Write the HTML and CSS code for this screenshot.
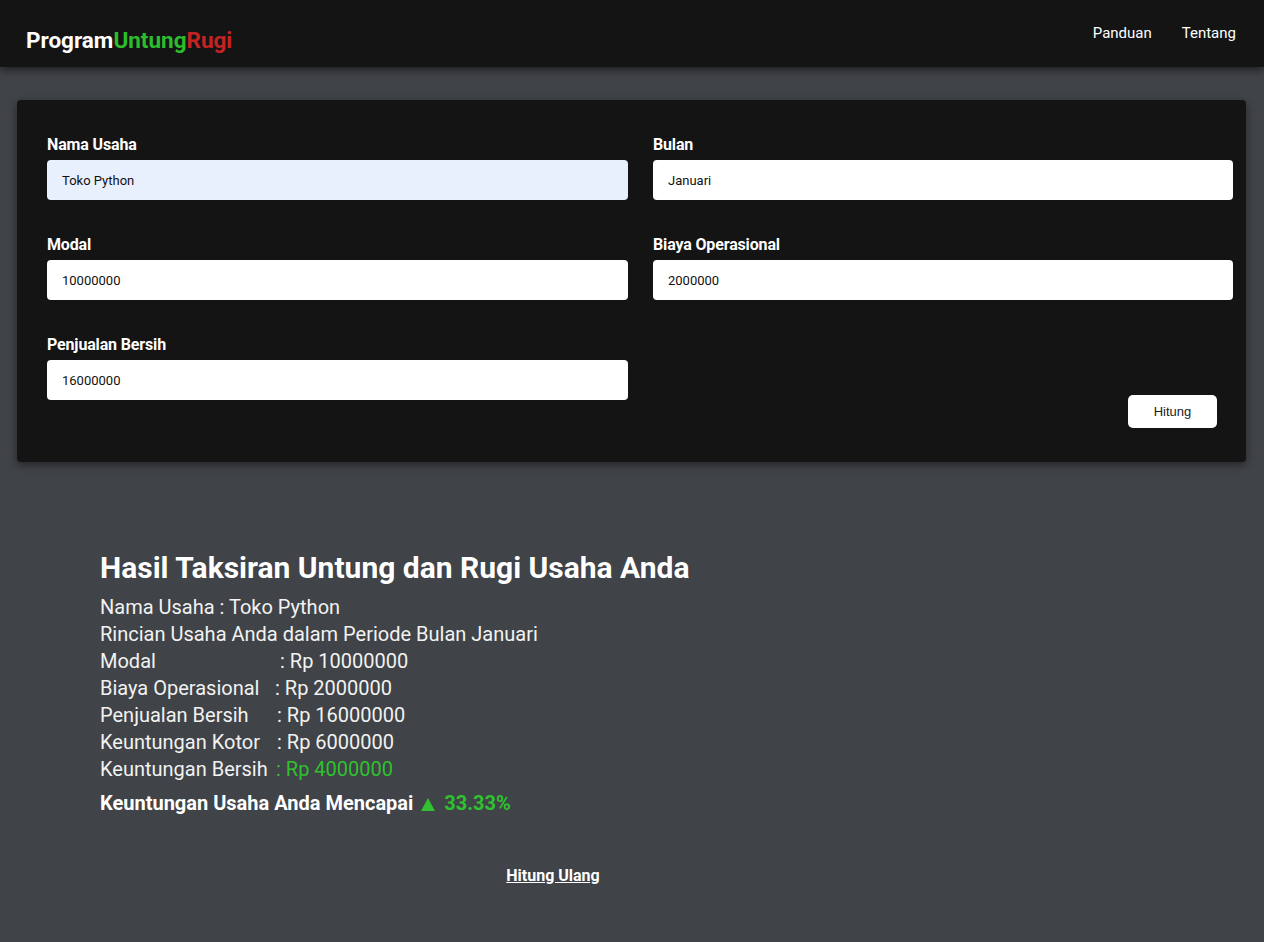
FILE: index.html
```html
<!DOCTYPE html>
<html lang="id">
<head>
<meta charset="utf-8">
<title>Program Untung Rugi</title>
<link rel="stylesheet" href="styles.css">
</head>
<body>
<header class="navbar">
  <div class="brand"><span class="b-white">Program</span><span class="b-green">Untung</span><span class="b-red">Rugi</span></div>
  <nav class="nav-links">
    <a href="#">Panduan</a>
    <a href="#">Tentang</a>
  </nav>
</header>

<main class="page">
  <form class="card">
    <div class="field">
      <label>Nama Usaha</label>
      <input class="input autofill" type="text" value="Toko Python">
    </div>
    <div class="field">
      <label>Bulan</label>
      <input class="input" type="text" value="Januari">
    </div>
    <div class="field">
      <label>Modal</label>
      <input class="input" type="text" value="10000000">
    </div>
    <div class="field">
      <label>Biaya Operasional</label>
      <input class="input" type="text" value="2000000">
    </div>
    <div class="field">
      <label>Penjualan Bersih</label>
      <input class="input" type="text" value="16000000">
    </div>
    <div class="actions">
      <button type="button" class="btn">Hitung</button>
    </div>
  </form>

  <section class="results">
    <h1 class="res-title">Hasil Taksiran Untung dan Rugi Usaha Anda</h1>
    <p class="res-line">Nama Usaha : Toko Python</p>
    <p class="res-line">Rincian Usaha Anda dalam Periode Bulan Januari</p>
    <p class="res-line"><span class="k k-modal">Modal</span>: Rp 10000000</p>
    <p class="res-line"><span class="k k-biaya">Biaya Operasional</span>: Rp 2000000</p>
    <p class="res-line"><span class="k k-jual">Penjualan Bersih</span>: Rp 16000000</p>
    <p class="res-line"><span class="k k-kotor">Keuntungan Kotor</span>: Rp 6000000</p>
    <p class="res-line"><span class="k k-bersih">Keuntungan Bersih</span><span class="green">: Rp 4000000</span></p>
    <p class="res-total">Keuntungan Usaha Anda Mencapai <span class="green"><svg class="tri" width="14" height="13" viewBox="0 0 14 13" aria-hidden="true"><polygon points="7,0 14,13 0,13" fill="#2fc12f"/></svg> 33.33%</span></p>
    <div class="again"><a href="#">Hitung Ulang</a></div>
  </section>
</main>
</body>
</html>
```

FILE: styles.css
```css
* { box-sizing: border-box; }

html, body {
  margin: 0;
  padding: 0;
}

body {
  background: #404347;
  font-family: Roboto, "Liberation Sans", sans-serif;
  color: #ffffff;
  min-height: 942px;
}

.navbar {
  height: 67px;
  background: #141414;
  display: flex;
  align-items: center;
  justify-content: space-between;
  padding: 0 28px 0 26px;
  box-shadow: 0 3px 8px rgba(0, 0, 0, 0.55);
  position: relative;
  z-index: 2;
}

.brand {
  font-size: 22.5px;
  font-weight: 700;
  margin-top: 13px;
}
.b-white { color: #ffffff; }
.b-green { color: #2cbd2c; }
.b-red { color: #c42323; }

.nav-links {
  display: flex;
  gap: 30px;
  margin-bottom: 2px;
}
.nav-links a {
  color: #ffffff;
  text-decoration: none;
  font-size: 15px;
}

.page {
  padding: 33px 18px 0 17px;
}

.card {
  background: #141414;
  border-radius: 4px;
  box-shadow: 0 3px 8px rgba(0, 0, 0, 0.45);
  padding: 36px 13px 34px 30px;
  display: grid;
  grid-template-columns: 581px 580px;
  column-gap: 25px;
  row-gap: 36px;
  margin: 0;
}

.field {
  display: flex;
  flex-direction: column;
}

.field label {
  font-size: 16px;
  font-weight: 700;
  line-height: 18px;
  margin-bottom: 6px;
  letter-spacing: -0.15px;
}

.input {
  height: 40px;
  border: none;
  border-radius: 4px;
  background: #ffffff;
  padding: 0 15px;
  font-family: Roboto, "Liberation Sans", sans-serif;
  font-size: 13px;
  color: #111111;
  outline: none;
}
.input.autofill {
  background: #e8f0fe;
}

.actions {
  display: flex;
  justify-content: flex-end;
  align-items: flex-start;
  padding-top: 59px;
  padding-right: 16px;
}

.btn {
  width: 89px;
  height: 33px;
  background: #ffffff;
  border: none;
  border-radius: 5px;
  font-family: "Liberation Sans", Arial, sans-serif;
  font-size: 13px;
  color: #222222;
  padding: 0;
}

.results {
  padding: 88px 0 0 83px;
  width: 989px;
}

.res-title {
  font-size: 30px;
  font-weight: 700;
  line-height: 36px;
  margin: 0 0 8px 0;
}

.res-line {
  font-size: 20px;
  line-height: 27px;
  margin: 0;
  color: #f2f2f2;
}

.k { display: inline-block; }
.k-modal { width: 180px; }
.k-biaya { width: 175px; }
.k-jual { width: 177px; }
.k-kotor { width: 177px; }
.k-bersih { width: 176px; }

.green { color: #2fc12f; }

.res-total {
  font-size: 20px;
  font-weight: 700;
  line-height: 27px;
  margin: 7px 0 0 0;
}

.tri {
  vertical-align: -1px;
  margin: 0 4px 0 3px;
}

.again {
  text-align: center;
  margin-top: 49px;
}
.again a {
  color: #ffffff;
  font-size: 16px;
  font-weight: 700;
}
```
